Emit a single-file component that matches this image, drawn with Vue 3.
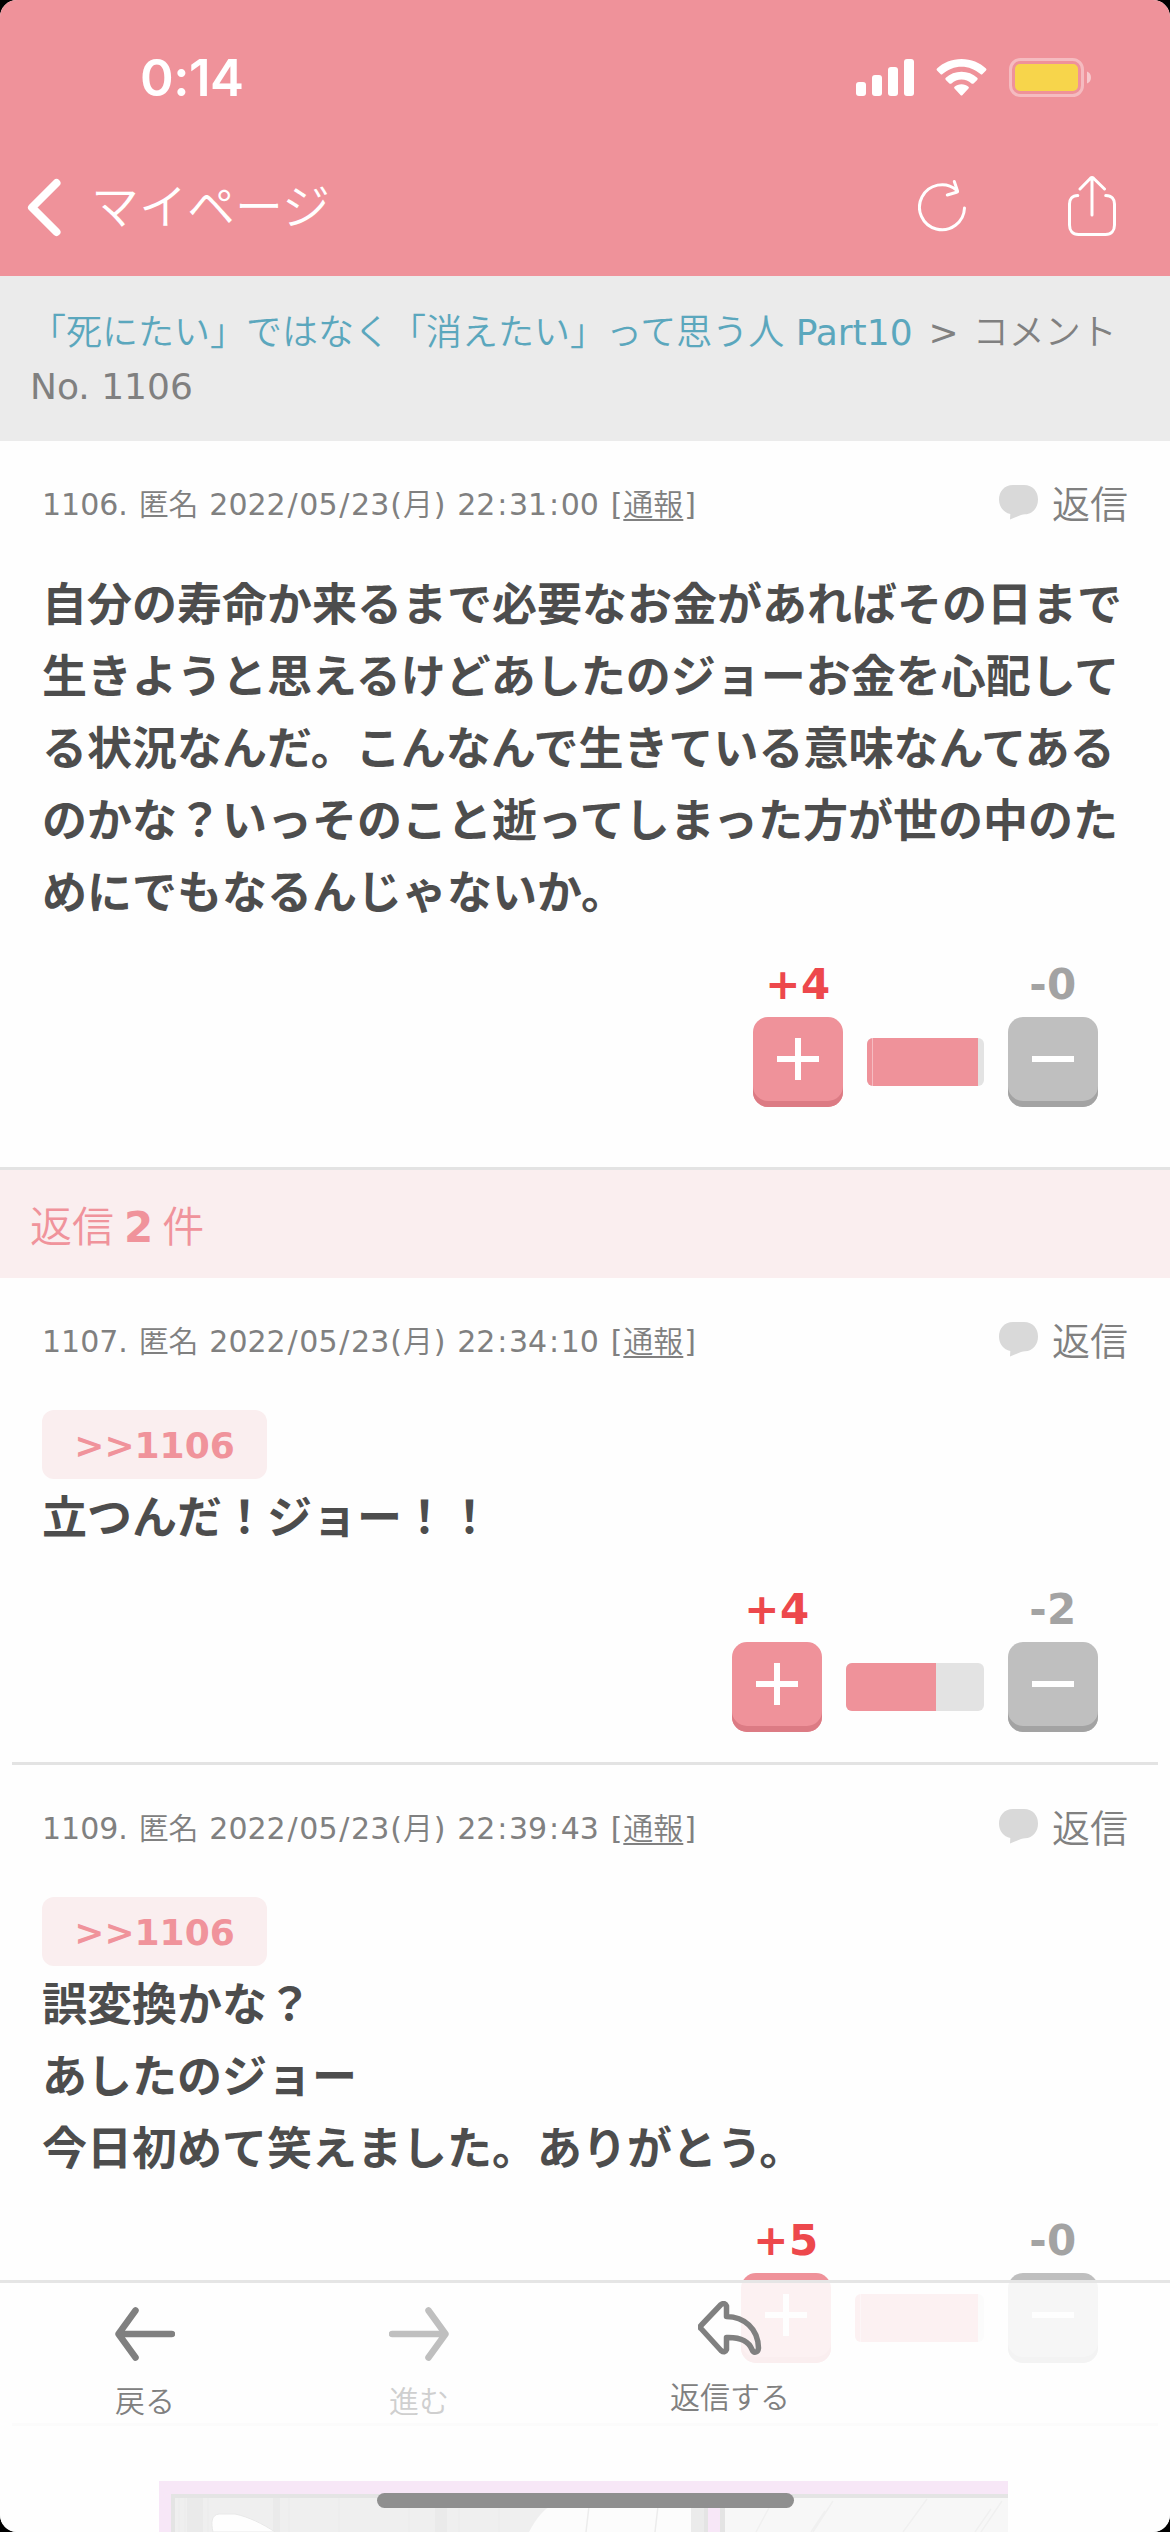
<script setup>
const link = '「死にたい」ではなく「消えたい」って思う人 '
const comments = [
  {
    no: 1106, time: '22:31:00', kind: 'main', plus: 4, minus: 0, bar: 117, fill: 111, seam: true,
    lines: [
      '自分の寿命か来るまで必要なお金があればその日まで',
      '生きようと思えるけどあしたのジョーお金を心配して',
      'る状況なんだ。こんなんで生きている意味なんてある',
      'のかな？いっそのこと逝ってしまった方が世の中のた',
      'めにでもなるんじゃないか。',
    ],
  },
  {
    no: 1107, time: '22:34:10', kind: 'first', anchor: 1106, plus: 4, minus: 2, bar: 138, fill: 90,
    lines: ['立つんだ！ジョー！！'],
  },
  {
    no: 1109, time: '22:39:43', kind: 'last', anchor: 1106, plus: 5, minus: 0, bar: 129, fill: 123, seam: true,
    lines: ['誤変換かな？', 'あしたのジョー', '今日初めて笑えました。ありがとう。'],
  },
]
const groups = [[comments[0]], comments.slice(1)]

// Splits a line into kanji, digit and punctuation runs so each gets its own weight and tracking.
const runs = (text) =>
  text.match(/[/:]|[()[\]]|[\d. ]+|[^\d./:()[\] ]+/g).map((t) => ({
    t,
    cls: /^[/:]$/.test(t) ? 'latin sign' : /^[()[\]]$/.test(t) ? 'latin bracket' : /^[\d. ]/.test(t) ? 'latin' : '',
  }))
const infoRuns = (c) => runs(`${c.no}. 匿名 2022/05/23(月) ${c.time} [`)
</script>

<template>
  <div class="screen">
    <header class="top">
      <div class="status">
        <span class="clock">0:14</span>
        <svg class="signals" width="240" height="42" viewBox="0 0 240 42">
          <g fill="#fff">
            <rect x="0" y="24" width="10" height="14" rx="3" />
            <rect x="16" y="17" width="10" height="21" rx="3" />
            <rect x="32" y="9" width="10" height="29" rx="3" />
            <rect x="48" y="1" width="10" height="37" rx="3" />
            <path d="M105.500 1C115 1 124 4.800 130 10.500Q131 11.500 130 12.500L126.500 16Q125.500 17 124.500 16C119 11.300 112.500 8.700 105.500 8.700S92 11.300 86.500 16Q85.500 17 84.500 16L81 12.500Q80 11.500 81 10.500C87 4.800 96 1 105.500 1Z" />
            <path d="M105.500 13.800C111.600 13.800 117 16.100 121.200 19.800Q122.300 20.800 121.200 21.900L117.600 25.400Q116.600 26.300 115.500 25.400C112.700 23 109.300 21.600 105.500 21.600S98.300 23 95.500 25.400Q94.400 26.300 93.400 25.400L89.800 21.900Q88.700 20.800 89.800 19.800C94 16.100 99.400 13.800 105.500 13.800Z" />
            <path d="M105.500 26.300C108.300 26.300 110.700 27.200 112.500 28.800Q113.400 29.700 112.500 30.600L106.500 37Q105.500 38 104.500 37L98.500 30.600Q97.600 29.700 98.500 28.800C100.300 27.200 102.700 26.300 105.500 26.300Z" />
          </g>
          <rect x="154.500" y="1.500" width="72" height="36" rx="10" fill="none" stroke="#fff" stroke-opacity=".38" stroke-width="3" />
          <rect x="159" y="6" width="63" height="27" rx="5" fill="#f7d54b" />
          <path d="M231 13.500C236.300 15 236.300 24 231 25.500Z" fill="#fff" fill-opacity=".5" />
        </svg>
      </div>
      <nav class="nav">
        <svg class="chevron" width="36" height="60" viewBox="0 0 36 60">
          <path d="M30.500 6 6 30.500 30.500 55" fill="none" stroke="#fff" stroke-width="8" stroke-linecap="round" stroke-linejoin="round" />
        </svg>
        <span class="title">マイページ</span>
        <svg class="reload" width="50" height="54" viewBox="0 0 50 54" fill="none" stroke="#fff" stroke-width="3" stroke-linecap="round" stroke-linejoin="round">
          <path d="M46.500 30A22.500 22.500 0 1 1 38.500 12" />
          <path d="M36.300 3.500 39.500 13Q39.700 14 38.500 14.300L29.300 17" />
        </svg>
        <svg class="share" width="50" height="62" viewBox="0 0 50 62" fill="none" stroke="#fff" stroke-width="3" stroke-linecap="round" stroke-linejoin="round">
          <path d="M10.800 20.500C5 20.500 2.500 24.500 2.500 29V50C2.500 55.500 5.500 59.500 11.500 59.500H38.500C44.500 59.500 47.500 55.500 47.500 50V29C47.500 24.500 45 20.500 38.700 20.500" />
          <path d="M25 40V3M13 14 23.500 3.200Q25 1.800 26.500 3.200L37.500 14" />
        </svg>
      </nav>
    </header>

    <div class="crumb"><a>{{ link }}<span class="latin">Part10</span></a><span class="latin sep">&gt;</span>コメント<br><span class="latin">No. 1106</span></div>

    <section v-for="(group, gi) in groups" :key="gi">
      <h2 v-if="gi === 1" class="heading">返信<b>2</b>件</h2>
      <article v-for="c in group" :key="c.no" class="comment" :class="c.kind">
        <div class="meta">
          <span class="info"><span v-for="(r, i) in infoRuns(c)" :key="i" :class="r.cls">{{ r.t }}</span><u>通報</u><span class="latin bracket">]</span></span>
          <span class="reply">
            <svg width="39" height="35" viewBox="0 0 39 35">
              <path d="M14 0H25C34 0 39 6.500 39 14.500S34 29 26 29.300C22.500 29.500 17 32 11 34.500L11.300 29C4.500 27.500 0 22 0 14.500S5 0 14 0Z" fill="#d9d9d9" />
            </svg>
            返信
          </span>
        </div>
        <div v-if="c.anchor" class="quote"><span class="chip">&gt;&gt;{{ c.anchor }}</span></div>
        <p class="body"><span v-for="l in c.lines" :key="l">{{ l }}</span></p>
        <div class="votes">
          <div class="vote up">
            <b>+{{ c.plus }}</b>
            <div class="key"><svg width="42" height="42" viewBox="0 0 42 42"><path d="M18 0H24V18H42V24H24V42H18V24H0V18H18Z" fill="#fff" /></svg></div>
          </div>
          <div class="bar" :style="{ width: c.bar + 'px' }">
            <div class="fill" :class="{ seam: c.seam }" :style="{ width: c.fill + 'px' }"></div>
          </div>
          <div class="vote down">
            <b>-{{ c.minus }}</b>
            <div class="key"><svg width="42" height="42" viewBox="0 0 42 42"><path d="M0 18H42V24H0Z" fill="#fff" /></svg></div>
          </div>
        </div>
      </article>
    </section>

    <svg class="ad" width="849" height="51" viewBox="0 0 849 51">
      <rect width="849" height="51" fill="#c447c4" />
      <rect x="14" y="14" width="386" height="37" fill="#868686" />
      <path d="M28 17H44V51H28ZM114 17H121V51H114ZM276 17H288V51H276Z" fill="#5d5d5d" />
      <path d="M20 17V51M26 17V51M49 17V51M130 17V51M180 17V51M250 17V51M300 17V51M340 17V51" stroke="#767676" stroke-width="2" />
      <path d="M54 51C52 42 52 34 60 33H76C90 36 104 43 116 51Z" fill="#fff" stroke="#4a4a4a" />
      <path d="M370 51C378 36 384 30 391 25H545V51Z" fill="#ececec" />
      <path d="M430 25 427 51M499 25 496 51" stroke="#6c6c6c" stroke-width="1.500" />
      <path d="M532 25H545V51H532Z" fill="#626262" />
      <path d="M545 17H549V51H545ZM561 17H566V51H561Z" fill="#2e2e2e" />
      <rect x="566" y="17" width="283" height="34" fill="#c6c6c6" />
      <path d="M14 51V15H545M566 15H849" fill="none" stroke="#292929" stroke-width="4" />
      <path d="M611 25 597 51M768 18 744 51M674 20 654 51M666 30 652 51M832 28 816 51M843 20 822 51" stroke="#8c8c8c" stroke-width="1.500" />
    </svg>

    <footer class="toolbar">
      <div class="tool back">
        <svg width="60" height="54" viewBox="0 0 60 54"><path d="M57 27H4M20.500 3.500 3.500 27 20.500 50.500" /></svg>
        戻る
      </div>
      <div class="tool forward">
        <svg width="60" height="54" viewBox="0 0 60 54"><path d="M3 27H56M39.500 3.500 56.500 27 39.500 50.500" /></svg>
        進む
      </div>
      <div class="tool respond">
        <svg width="64" height="54" viewBox="0 0 64 54"><path d="M3 24.500 23 3.500Q27 1 28.500 5V15.500C46 16 60 27 60.500 47C60 52 55.500 52.500 54 48.500C51 41 43 36 28.500 36.500V48.500Q27 52.500 23 49.500L3 27.500Q1.500 26 3 24.500Z" /></svg>
        返信する
      </div>
    </footer>
    <div class="home"></div>
  </div>
</template>

<style>
body {
  margin: 0;
  background: #000;
}
</style>

<style scoped>
.screen {
  position: relative;
  width: 1170px;
  height: 2532px;
  overflow: hidden;
  border-radius: 17px;
  background: #fefefe;
  color: #808080;
  font-family: "DejaVu Sans", "Noto Sans CJK JP", sans-serif;
  font-weight: 350;
  text-spacing-trim: space-all;
  white-space: nowrap;
}
.latin {
  font-weight: 400;
}
.top {
  height: 276px;
  background: #ef929a;
  color: #fff;
}
.status {
  display: flex;
  justify-content: space-between;
  height: 138px;
  padding: 58px 74px 0 140px;
  box-sizing: border-box;
}
.clock {
  font: 600 51px/40px Inter, sans-serif;
  letter-spacing: -0.5px;
}
.nav {
  display: flex;
  align-items: center;
  height: 138px;
  padding: 0 53px 0 26px;
}
.title {
  flex: 1;
  margin-left: 29px;
  font-size: 48px;
  line-height: 60px;
}
.reload {
  margin: -4px 99px 0 0;
}
.share {
  margin-top: -2px;
}
.crumb {
  height: 165px;
  padding: 30px 30px 0;
  box-sizing: border-box;
  background: #ebebeb;
  font-size: 36px;
  line-height: 54px;
}
.crumb a {
  color: #5ba7bd;
}
.sep {
  margin: 0 14px 0 16px;
}
.comment {
  padding: 44px 42px 0;
}
.main {
  border-bottom: 3px solid #e3e3e3;
  padding-bottom: 60px;
}
.first {
  padding-bottom: 30px;
}
.last::before {
  content: "";
  display: block;
  height: 3px;
  margin: -44px -30px 44px;
  background: #e3e3e3;
}
.meta {
  display: flex;
  justify-content: space-between;
  height: 83px;
}
.info {
  font-size: 30px;
  line-height: 40px;
  word-spacing: 0.04em;
}
.sign {
  margin: 0 0.058em;
}
.bracket {
  margin: 0 0.032em;
}
.info u {
  text-underline-offset: 4px;
  text-decoration-thickness: 2px;
}
.reply {
  display: flex;
  gap: 14px;
  font-size: 38px;
  line-height: 40px;
}
.quote {
  height: 76px;
  padding-top: 5px;
  box-sizing: border-box;
}
.chip {
  display: block;
  width: 225px;
  border-radius: 12px;
  background: #faeeef;
  color: #f0939b;
  font-size: 36px;
  font-weight: 700;
  line-height: 71px;
  height: 69px;
  text-align: center;
}
.body {
  margin: -2px 0 2px;
  color: #4d4d4d;
  font: 700 45px/72px "Noto Sans CJK JP", sans-serif;
}
.body span {
  display: block;
}
.votes {
  display: flex;
  justify-content: flex-end;
  gap: 24px;
  padding: 32px 30px 0 0;
}
.vote {
  width: 90px;
}
.vote b {
  display: flex;
  justify-content: center;
  height: 57px;
  font-size: 42px;
  font-weight: 700;
  line-height: 49px;
  letter-spacing: 0.5px;
}
.up b {
  color: #ed484c;
}
.down b {
  color: #a3a3a3;
}
.key {
  display: flex;
  justify-content: center;
  height: 90px;
  padding-top: 21px;
  box-sizing: border-box;
  border-radius: 15px;
  background: #ef929a;
  box-shadow: inset 0 -6px #dc7b84;
}
.down .key {
  background: #bfbfbf;
  box-shadow: inset 0 -6px #a3a3a3;
}
.bar {
  height: 48px;
  margin-top: 78px;
  overflow: hidden;
  border-radius: 6px;
  background: #e3e3e3;
}
.fill {
  height: 48px;
  background: #ef929a;
}
.fill.seam {
  background: linear-gradient(90deg, #ef929a 5px, #f6bcc2 5px, #f6bcc2 6px, #ef929a 6px);
}
.heading {
  margin: 0;
  height: 108px;
  padding-left: 30px;
  background: #faeeef;
  color: #f0939b;
  font-size: 42px;
  font-weight: 350;
  line-height: 116px;
}
.heading b {
  margin: 0 9px 0 10px;
  font-weight: 700;
}
.ad {
  position: absolute;
  left: 159px;
  bottom: 0;
}
.last::after {
  content: "";
  display: block;
  height: 3px;
  margin: 60px -30px 0;
  background: #e3e3e3;
}
.toolbar {
  position: absolute;
  inset: 2280px 0 0;
  display: flex;
  border-top: 3px solid #e5e5e5;
  background: rgba(254, 254, 254, 0.88);
}
.tool {
  display: flex;
  flex-direction: column;
  align-items: center;
  padding-top: 24px;
  font-size: 30px;
  line-height: 44px;
}
.tool svg {
  margin-bottom: 19px;
  fill: none;
  stroke: #808080;
  stroke-width: 6.500px;
  stroke-linecap: round;
  stroke-linejoin: round;
}
.back {
  width: 120px;
  margin-left: 85px;
}
.forward {
  width: 120px;
  margin-left: 154px;
  color: #cfcfcf;
}
.forward svg {
  stroke: #bfbfbf;
}
.respond {
  width: 200px;
  margin-left: 151px;
  padding-top: 18px;
}
.respond svg {
  margin-bottom: 21px;
  stroke-width: 5.500px;
}
.home {
  position: absolute;
  left: 377px;
  bottom: 24px;
  width: 417px;
  height: 15px;
  border-radius: 8px;
  background: #8f8f8f;
}
</style>
